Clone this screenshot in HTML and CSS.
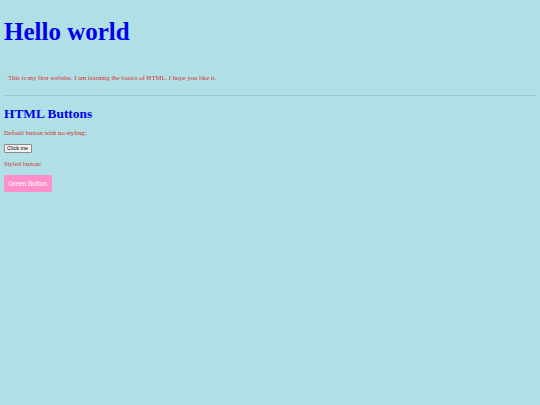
FILE: index.html
```html
<!DOCTYPE html>
<html>
<head>
<meta charset="utf-8">
<link rel="stylesheet" href="styles.css">
</head>
<body class="page">
<h1 class="title">Hello world</h1>
<p class="intro">This is my first website. I am learning the basics of HTML. I hope you like it.</p>
<hr class="rule">
<h2 class="subtitle">HTML Buttons</h2>
<p class="note">Default button with no styling:</p>
<button class="plain-btn">Click me</button>
<p class="note note-second">Styled button:</p>
<button class="green-btn">Green Button</button>
</body>
</html>
```
FILE: styles.css
```css
html, body {
  margin: 0;
  padding: 0;
}
.page {
  background: #b0e0e6;
  padding: 4px;
  font-family: "Liberation Serif", serif;
  min-height: 405px;
  box-sizing: border-box;
}
.title {
  color: #0000ee;
  font-size: 25px;
  font-weight: bold;
  margin: 13px 0 0;
  line-height: 30px;
}
.intro {
  color: #d83030;
  font-size: 6.7px;
  margin: 27px 0 0;
  padding-left: 4px;
  line-height: 8px;
}
.rule {
  border: none;
  border-top: 1px solid #9fc8cf;
  margin: 13px 0 0;
  height: 0;
}
.subtitle {
  color: #0000ee;
  font-size: 13.4px;
  font-weight: bold;
  margin: 10px 0 0;
  line-height: 16px;
}
.note {
  color: #d03030;
  font-size: 6.7px;
  margin: 7px 0 0;
  line-height: 8px;
}
.note-second {
  margin-top: 7px;
}
.plain-btn {
  display: block;
  margin: 7px 0 0 -0.5px;
  font-family: "Liberation Sans", sans-serif;
  font-size: 5.5px;
  padding: 0 2.5px;
  height: 9px;
  line-height: 7px;
  white-space: nowrap;
  background: #f0f0f0;
  border: 1px solid #8a8a8a;
  border-radius: 1px;
  color: #000;
}
.green-btn {
  display: block;
  margin: 7px 0 0 -0.5px;
  font-family: "Liberation Sans", sans-serif;
  font-size: 6.5px;
  color: #fff;
  background: #ff8fc8;
  border: none;
  border-radius: 2px;
  width: 48px;
  height: 17px;
  padding: 0;
}
```
